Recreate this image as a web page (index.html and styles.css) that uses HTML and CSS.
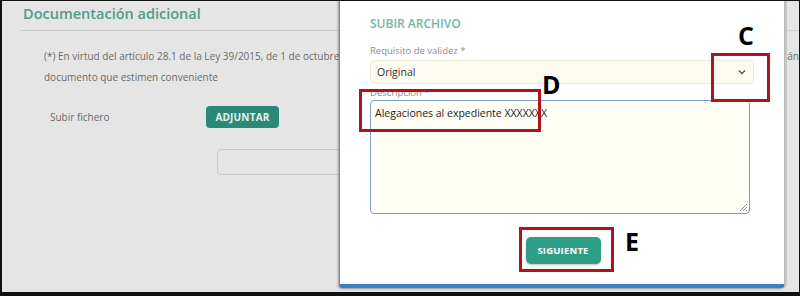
FILE: index.html
```html
<!DOCTYPE html>
<html lang="es">

<head>
    <meta charset="UTF-8">
    <meta name="viewport" content="width=device-width, initial-scale=1.0">
    <title>Subir archivo</title>
    <link rel="stylesheet" href="styles.css">
</head>

<body>
    <div class="frame">
        <!-- página de fondo (atenuada por el modal) -->
        <div class="page">
            <h2 class="section-title">Documentación adicional</h2>

            <div class="note">
                <p class="note-line">
                    <span>(*) En virtud del artículo 28.1 de la Ley 39/2015, de 1 de octubre,</span>
                    <span>rán</span>
                </p>
                <p class="note-line">documento que estimen conveniente</p>
            </div>

            <div class="upload-row">
                <span class="upload-label">Subir fichero</span>
                <button class="btn btn-page">ADJUNTAR</button>
            </div>

            <div class="file-box"></div>
        </div>

        <!-- modal -->
        <div class="modal">
            <h3 class="modal-title">SUBIR ARCHIVO</h3>

            <label class="field-label">Requisito de validez *</label>
            <div class="select">
                <span>Original</span>
                <svg class="chevron" width="8" height="6" viewBox="0 0 8 6">
                    <path d="M1 1.5 L4 4.5 L7 1.5" fill="none" stroke="#555" stroke-width="1.4" />
                </svg>
            </div>

            <label class="field-label field-label-desc">Descripción *</label>
            <div class="textarea">
                <span>Alegaciones al expediente XXXXXXX</span>
                <svg class="grip" width="10" height="10" viewBox="0 0 10 10">
                    <path d="M9 2 L2 9 M9 5 L5 9 M9 8 L8 9" stroke="#888" stroke-width="1" />
                </svg>
            </div>

            <div class="modal-actions">
                <button class="btn btn-modal">SIGUIENTE</button>
            </div>
        </div>

        <!-- anotaciones -->
        <div class="mark mark-c"></div>
        <span class="mark-letter letter-c">C</span>
        <div class="mark mark-d"></div>
        <span class="mark-letter letter-d">D</span>
        <div class="mark mark-e"></div>
        <span class="mark-letter letter-e">E</span>
    </div>
</body>

</html>
```

FILE: styles.css
```css
:root {
    --green: #2f9e86;
    --green-dim: #2b8a77;
    --red: #b0131d;
    --gray-text: #6b6b6b;
}

* {
    box-sizing: border-box;
    margin: 0;
    padding: 0;
}

body {
    font-family: 'Open Sans', 'Noto Sans', sans-serif;
    background: #111;
}

.frame {
    position: relative;
    width: 800px;
    height: 296px;
    overflow: hidden;
    background: #e5e5e5;
    border-top: 1px solid #111;
    border-left: 2px solid #111;
    border-right: 1px solid #111;
    border-bottom: 4px solid #111;
}

/* página de fondo */
.page {
    padding: 2px 0 0 18px;
}

.section-title {
    font-size: 14.5px;
    font-weight: 600;
    color: #4d9d8b;
    padding: 0 0 5px 3px;
    border-bottom: 1px solid #cdcdcd;
    line-height: 22px;
}

.note {
    padding: 15px 0 0 24px;
}

.note-line {
    display: flex;
    justify-content: space-between;
    font-size: 10px;
    line-height: 21px;
    color: var(--gray-text);
    white-space: nowrap;
}

.upload-row {
    display: flex;
    align-items: center;
    padding: 18px 0 0 30px;
}

.upload-label {
    width: 156px;
    font-size: 10px;
    color: var(--gray-text);
}

.btn {
    border: none;
    border-radius: 4px;
    color: #fff;
    font-family: inherit;
    font-weight: 700;
    font-size: 10px;
    letter-spacing: 0.2px;
}

.btn-page {
    width: 73px;
    height: 22px;
    background: var(--green-dim);
    color: #e8efec;
}

.file-box {
    margin: 21px 0 0 197px;
    width: 200px;
    height: 26px;
    border: 1px solid #cacaca;
    border-radius: 4px;
}

/* modal */
.modal {
    position: absolute;
    left: 337px;
    top: -12px;
    width: 446px;
    height: 299px;
    background: #fff;
    border-left: 1px solid #8a8a8a;
    border-right: 1px solid #b8b8b8;
    border-bottom: 4px solid #3b7fc4;
    border-radius: 0 0 4px 4px;
    box-shadow: 2px 0 0 #c6c6c6, -1px 1px 2px rgba(0, 0, 0, 0.35);
    padding: 27px 30px 0 30px;
}

.modal-title {
    font-size: 12px;
    font-weight: 600;
    color: #6bb8a7;
    line-height: 16px;
}

.field-label {
    display: block;
    font-size: 9.5px;
    color: #8a8a8a;
    margin-top: 12px;
    line-height: 14px;
}

.select {
    display: flex;
    align-items: center;
    justify-content: space-between;
    width: 384px;
    height: 24px;
    margin-top: 2px;
    padding: 0 6px;
    background: #fcfbef;
    border: 1px solid #ebeae0;
    border-radius: 4px;
    font-size: 10.5px;
    color: #333;
}

.chevron {
    margin-right: 1px;
}

.field-label-desc {
    margin-top: 2px;
    line-height: 14px;
}

.textarea {
    position: relative;
    width: 380px;
    height: 114px;
    padding: 5px 4px;
    background: #fffff6;
    border: 1px solid #7d9ec7;
    border-radius: 4px;
    font-size: 10.5px;
    color: #222;
}

.grip {
    position: absolute;
    right: 1px;
    bottom: 1px;
}

.modal-actions {
    display: flex;
    justify-content: center;
    padding: 23px 0 0 2px;
    width: 384px;
}

.btn-modal {
    width: 75px;
    height: 27px;
    background: var(--green);
    border-radius: 5px;
    font-size: 9.5px;
    box-shadow: 0 1px 2px rgba(0, 0, 0, 0.25);
}

/* anotaciones */
.mark {
    position: absolute;
    border: 3px solid var(--red);
}

.mark-c {
    left: 709px;
    top: 52px;
    width: 59px;
    height: 49px;
}

.mark-d {
    left: 357px;
    top: 88px;
    width: 182px;
    height: 43px;
}

.mark-e {
    left: 517px;
    top: 226px;
    width: 95px;
    height: 45px;
}

.mark-letter {
    position: absolute;
    font-family: 'Open Sans', sans-serif;
    font-weight: 700;
    font-size: 25px;
    line-height: 1;
    color: #000;
}

.letter-c {
    left: 736px;
    top: 22px;
}

.letter-d {
    left: 540px;
    top: 71px;
}

.letter-e {
    left: 623px;
    top: 228px;
}
```
